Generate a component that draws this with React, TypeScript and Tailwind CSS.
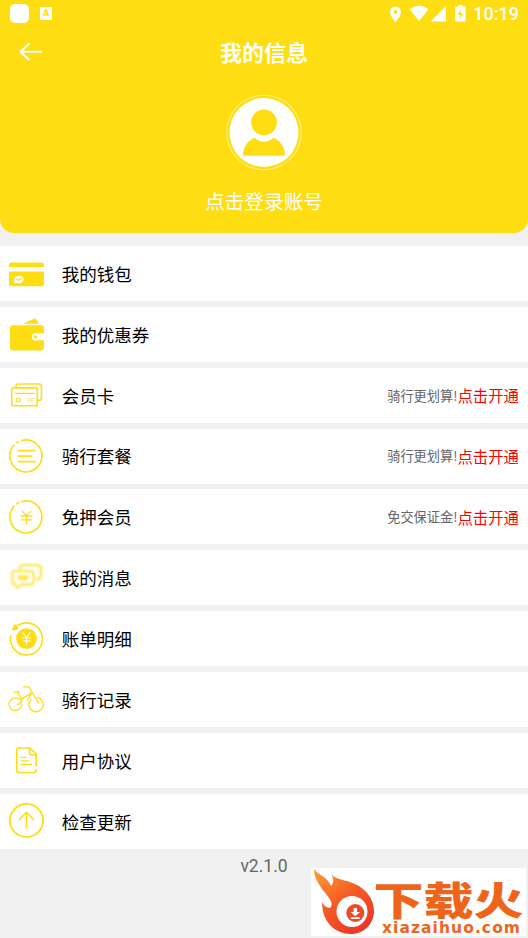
import type { ReactNode } from 'react';

function Icon({ children, blurred = false }: { children: ReactNode; blurred?: boolean }) {
  return (
    <svg
      viewBox="0 0 36 36"
      className={blurred ? 'size-9 shrink-0 opacity-75 blur-[0.9px]' : 'size-9 shrink-0'}
      fill="none"
      stroke="#fede12"
      strokeWidth="1.6"
      strokeLinecap="round"
      strokeLinejoin="round"
    >
      {children}
    </svg>
  );
}

function CardIcon() {
  return (
    <Icon>
      <g stroke="none" fill="#fede12">
        <path d="M1 11V8.500a2 2 0 0 1 2-2h31a2 2 0 0 1 2 2V11z" />
        <path d="M1 15.500h35v12.800a2 2 0 0 1-2 2H3a2 2 0 0 1-2-2z" />
        <path d="M7 27.300c-2.500-4 .5-7.600 4-7.600 6.500 0 5.500 7.500 0 7.500l-1.500-.3z" fill="#fff" />
      </g>
      <path d="m8.500 23.200 2 1 3.200-2" strokeWidth="1.200" />
    </Icon>
  );
}

function PurseIcon() {
  return (
    <Icon>
      <g stroke="none" fill="#fede12">
        <path d="M14.500 7.800 25 3.200c2-.8 3.500-.4 4.200 1.200L30.500 7.800z" />
        <path d="M5 9.300h28a3 3 0 0 1 3 3v5.300h-8a3.300 3.300 0 0 0 0 6.600h8v7.400a3 3 0 0 1-3 3H5a3 3 0 0 1-3-3V12.300a3 3 0 0 1 3-3z" />
        <circle cx="27.500" cy="20.900" r="3.600" fill="#fff" />
        <circle cx="27.300" cy="20.900" r="1.700" />
      </g>
    </Icon>
  );
}

function VipIcon() {
  return (
    <Icon>
      <path d="M8 10V8.700A1.700 1.700 0 0 1 9.700 7h22A1.700 1.700 0 0 1 33.400 8.700v12.600a2 2 0 0 1-2 2H30" />
      <rect x="3.700" y="10.900" width="25.600" height="17.800" rx="1.800" />
      <path d="M7.500 16.300h18.500" strokeWidth="1.300" />
      <circle cx="10.200" cy="22.900" r="1.900" strokeWidth="1.200" />
      <text x="19" y="25.300" fontSize="4.500" fontFamily="Liberation Sans, sans-serif" fill="#fede12" stroke="none">
        VIP
      </text>
    </Icon>
  );
}

function BrokenRing() {
  return (
    <>
      <path d="M13.700 2.500A16 16 0 1 1 6 7.300" />
      <path d="m8.500 4.900 2.200-1.300" />
    </>
  );
}

function PackageIcon() {
  return (
    <Icon>
      <BrokenRing />
      <path d="M10.800 12.700h16M10.800 18.200h12.700M10.800 23.700h16" strokeWidth="1.800" />
    </Icon>
  );
}

function DepositIcon() {
  return (
    <Icon>
      <BrokenRing />
      <path d="m14.300 12.400 4.200 4.200 4.200-4.200M13.200 17h10.600M13.200 20.800h10.600M18.500 16.600v8.600" strokeWidth="1.300" />
    </Icon>
  );
}

function MessageIcon() {
  return (
    <Icon blurred>
      <path
        d="M12 8.500q.3-3.300 3-3.300h14.500q3.500 0 3.500 3.500v7q0 3.500-4 3.700"
        strokeWidth="2.300"
      />
      <path
        d="M7 11.200h15.500q3 0 3 3v7.500q0 3-3 3H13l-3.500 3-1.500-3q-3.800 0-3.800-3v-7.500q0-3 2.800-3z"
        strokeWidth="2.300"
      />
      <path d="M10.500 16.500h9.500M11.500 19h7" strokeWidth="2.600" />
    </Icon>
  );
}

function BillIcon() {
  return (
    <Icon>
      <path d="M7.500 6.200A16 16 0 1 1 2.700 15" />
      <path d="m5 8.700 1.600-4.700 3.200 3.600z" fill="#fede12" />
      <circle cx="18.500" cy="17.600" r="10.400" fill="#fede12" stroke="none" />
      <path d="m15 11.800 3.500 5 3.500-5M14.700 17h7.600M14.700 20h7.600M18.500 17v6.200" stroke="#fff" strokeWidth="1.100" />
    </Icon>
  );
}

function BikeIcon() {
  return (
    <Icon>
      <g strokeWidth="1.300">
        <path d="M11 18a6.300 6.300 0 1 0 2.700 5.500M23 18.500a7.200 7.200 0 1 0 6.300-2" />
        <path d="M5.700 10.800h5.700M9.500 10.800l4.500 9M15.500 5.800h5.200l9.800 16M12.300 18.600l11.200-6.500M14 19.800q-1 3-4.500 3.700M23.500 12.100l-4 7.200" />
      </g>
    </Icon>
  );
}

function DocIcon() {
  return (
    <Icon>
      <path d="M28.200 27.500v1a2 2 0 0 1-2 2H10.700a2 2 0 0 1-2-2V8a2 2 0 0 1 2-2h11.500l6 6.200v11.600M21.500 6.200v4.500a2 2 0 0 0 2 2h4.500" />
      <path d="M13 15.300h5M13 18.800h7.500M13 22.300h10.500" strokeWidth="1.300" />
    </Icon>
  );
}

function UpdateIcon() {
  return (
    <Icon>
      <circle cx="18.500" cy="17.500" r="16.600" strokeWidth="1.800" />
      <path d="M18.500 25.500V9.500M10.800 17l7.700-7.700 7.700 7.700" strokeLinecap="butt" strokeLinejoin="miter" />
    </Icon>
  );
}

type Item = { label: string; icon: ReactNode; hint?: string };

const items: Item[] = [
  { label: '我的钱包', icon: <CardIcon /> },
  { label: '我的优惠券', icon: <PurseIcon /> },
  { label: '会员卡', icon: <VipIcon />, hint: '骑行更划算!' },
  { label: '骑行套餐', icon: <PackageIcon />, hint: '骑行更划算!' },
  { label: '免押会员', icon: <DepositIcon />, hint: '免交保证金!' },
  { label: '我的消息', icon: <MessageIcon /> },
  { label: '账单明细', icon: <BillIcon /> },
  { label: '骑行记录', icon: <BikeIcon /> },
  { label: '用户协议', icon: <DocIcon /> },
  { label: '检查更新', icon: <UpdateIcon /> },
];

function Row({ label, icon, hint }: Item) {
  return (
    <div className="flex h-[55px] items-center bg-white pr-[9px] pl-2">
      {icon}
      <span className="ml-[17.700px] pt-[0.400px] text-[17.500px] leading-none text-black">{label}</span>
      {hint && (
        <span className="ml-auto flex items-center leading-none">
          <span className="text-[13.200px] text-[#666]">{hint}</span>
          <span className="pt-[1.600px] text-[15.400px] text-[#ff0000]">点击开通</span>
        </span>
      )}
    </div>
  );
}

function StatusBar() {
  return (
    <div className="flex h-[27px] items-center justify-between pr-[9px] pl-[10px] text-white">
      <div className="flex items-center">
        <div className="size-[19px] rounded-[5px] bg-white" />
        <div className="ml-[11px] flex h-[13px] w-3 items-center justify-center bg-white font-['Roboto'] text-[9px] leading-none font-black text-[#fede12]">
          A
        </div>
      </div>
      <div className="flex items-center">
        <svg viewBox="0 0 80 20" className="mr-[6px] h-5 w-20" fill="#fff">
          <path fillRule="evenodd" d="M8.500 2.500a5.500 5.500 0 0 0-5.500 5.500c0 4 5.500 10 5.500 10s5.500-6 5.500-10a5.500 5.500 0 0 0-5.500-5.500zm0 3.500a2 2 0 1 1 0 4 2 2 0 0 1 0-4z" />
          <path d="M22.700 5.300q9.400-7.400 18.800 0L32.100 17z" />
          <path d="M59 2v15.500H43.500z" />
          <path fillRule="evenodd" d="M71.500 1h4v1.500h2.200a1 1 0 0 1 1 1v13a1 1 0 0 1-1 1h-8.500a1 1 0 0 1-1-1v-13a1 1 0 0 1 1-1h2.300zm3 4-4 5.700h2.700l-1 4.500 4-5.700h-2.700z" />
        </svg>
        <span className="pt-px font-['Roboto'] text-[18px] leading-none font-medium">10:19</span>
      </div>
    </div>
  );
}

function Header() {
  return (
    <header className="h-[233px] rounded-b-[14px] bg-[#fede12] text-white">
      <StatusBar />
      <div className="grid h-[50px] grid-cols-[1fr_auto_1fr] items-center">
        <svg
          viewBox="0 0 24 20"
          className="ml-[19px] h-5 w-6"
          fill="none"
          stroke="#fff"
          strokeWidth="1.900"
          strokeLinecap="round"
          strokeLinejoin="round"
        >
          <path d="M22.500 9.700h-21M10 1.700l-8.500 8 8.500 8" />
        </svg>
        <h1 className="pb-[3px] text-[22px] leading-none font-bold">我的信息</h1>
      </div>
      <div className="flex flex-col items-center pt-4">
        <svg viewBox="0 0 78 78" className="size-[78px]">
          <circle cx="39" cy="39.500" r="37.300" fill="none" stroke="#fff" strokeOpacity=".55" />
          <circle cx="39" cy="39.500" r="34.500" fill="#fff" />
          <circle cx="39" cy="29.300" r="12.900" fill="#fede12" />
          <path d="M18 62.700c0-8 4-14.500 11.300-18q9.700 8 19.400 0C56 48.200 60 54.700 60 62.700z" fill="#fede12" />
        </svg>
        <span className="mt-5 text-[19.700px] leading-none">点击登录账号</span>
      </div>
    </header>
  );
}

function Watermark() {
  return (
    <div className="absolute top-[868px] left-[311px] h-[68px] w-[215px] bg-white">
      <svg viewBox="0 0 215 68" className="size-full">
        <defs>
          <linearGradient id="flame" x1="0" y1="0" x2=".65" y2="1">
            <stop offset="0" stopColor="#ffa132" />
            <stop offset=".55" stopColor="#f45a25" />
            <stop offset="1" stopColor="#ec3927" />
          </linearGradient>
        </defs>
        <path
          d="M3 1C7 7 16 8 20 18c3-3 3-7 0-12 5 6 16 6 24 10 11 5 19 15 19 27 0 13-10 23-23 23-16 0-29-12-29-32 2 4 6 7 9 5 3-6-6-13-11-21C6 13 3 8 3 1z"
          fill="url(#flame)"
        />
        <circle cx="41" cy="43.500" r="15.500" fill="#fff" />
        <circle cx="44.300" cy="45" r="9" fill="#ed4a26" />
        <path d="M42.600 40H46v4h3l-4.700 4.300L39.600 44h3zM39.800 49.300h9v1.600h-9z" fill="#fff" />
        <text
          x="62.500"
          y="47"
          fontSize="39"
          fontWeight="900"
          textLength="150"
          lengthAdjust="spacingAndGlyphs"
          fill="#ef641b"
        >
          下载火
        </text>
        <text
          x="71"
          y="65"
          fontSize="15.500"
          fontWeight="700"
          fontFamily="DejaVu Sans, sans-serif"
          textLength="138"
          fill="#ef641b"
        >
          xiazaihuo.com
        </text>
      </svg>
    </div>
  );
}

export default function App() {
  return (
    <div className="relative h-[938px] w-[528px] overflow-hidden bg-[#f1f1f1] font-['Noto_Sans_CJK_SC',sans-serif]">
      <Header />
      <main className="mt-[13px] flex flex-col gap-[5.850px]">
        {items.map((item) => (
          <Row key={item.label} {...item} />
        ))}
      </main>
      <p className="mt-[9px] text-center font-['Roboto'] text-[17.500px] leading-none text-[#666]">v2.1.0</p>
      <Watermark />
    </div>
  );
}
